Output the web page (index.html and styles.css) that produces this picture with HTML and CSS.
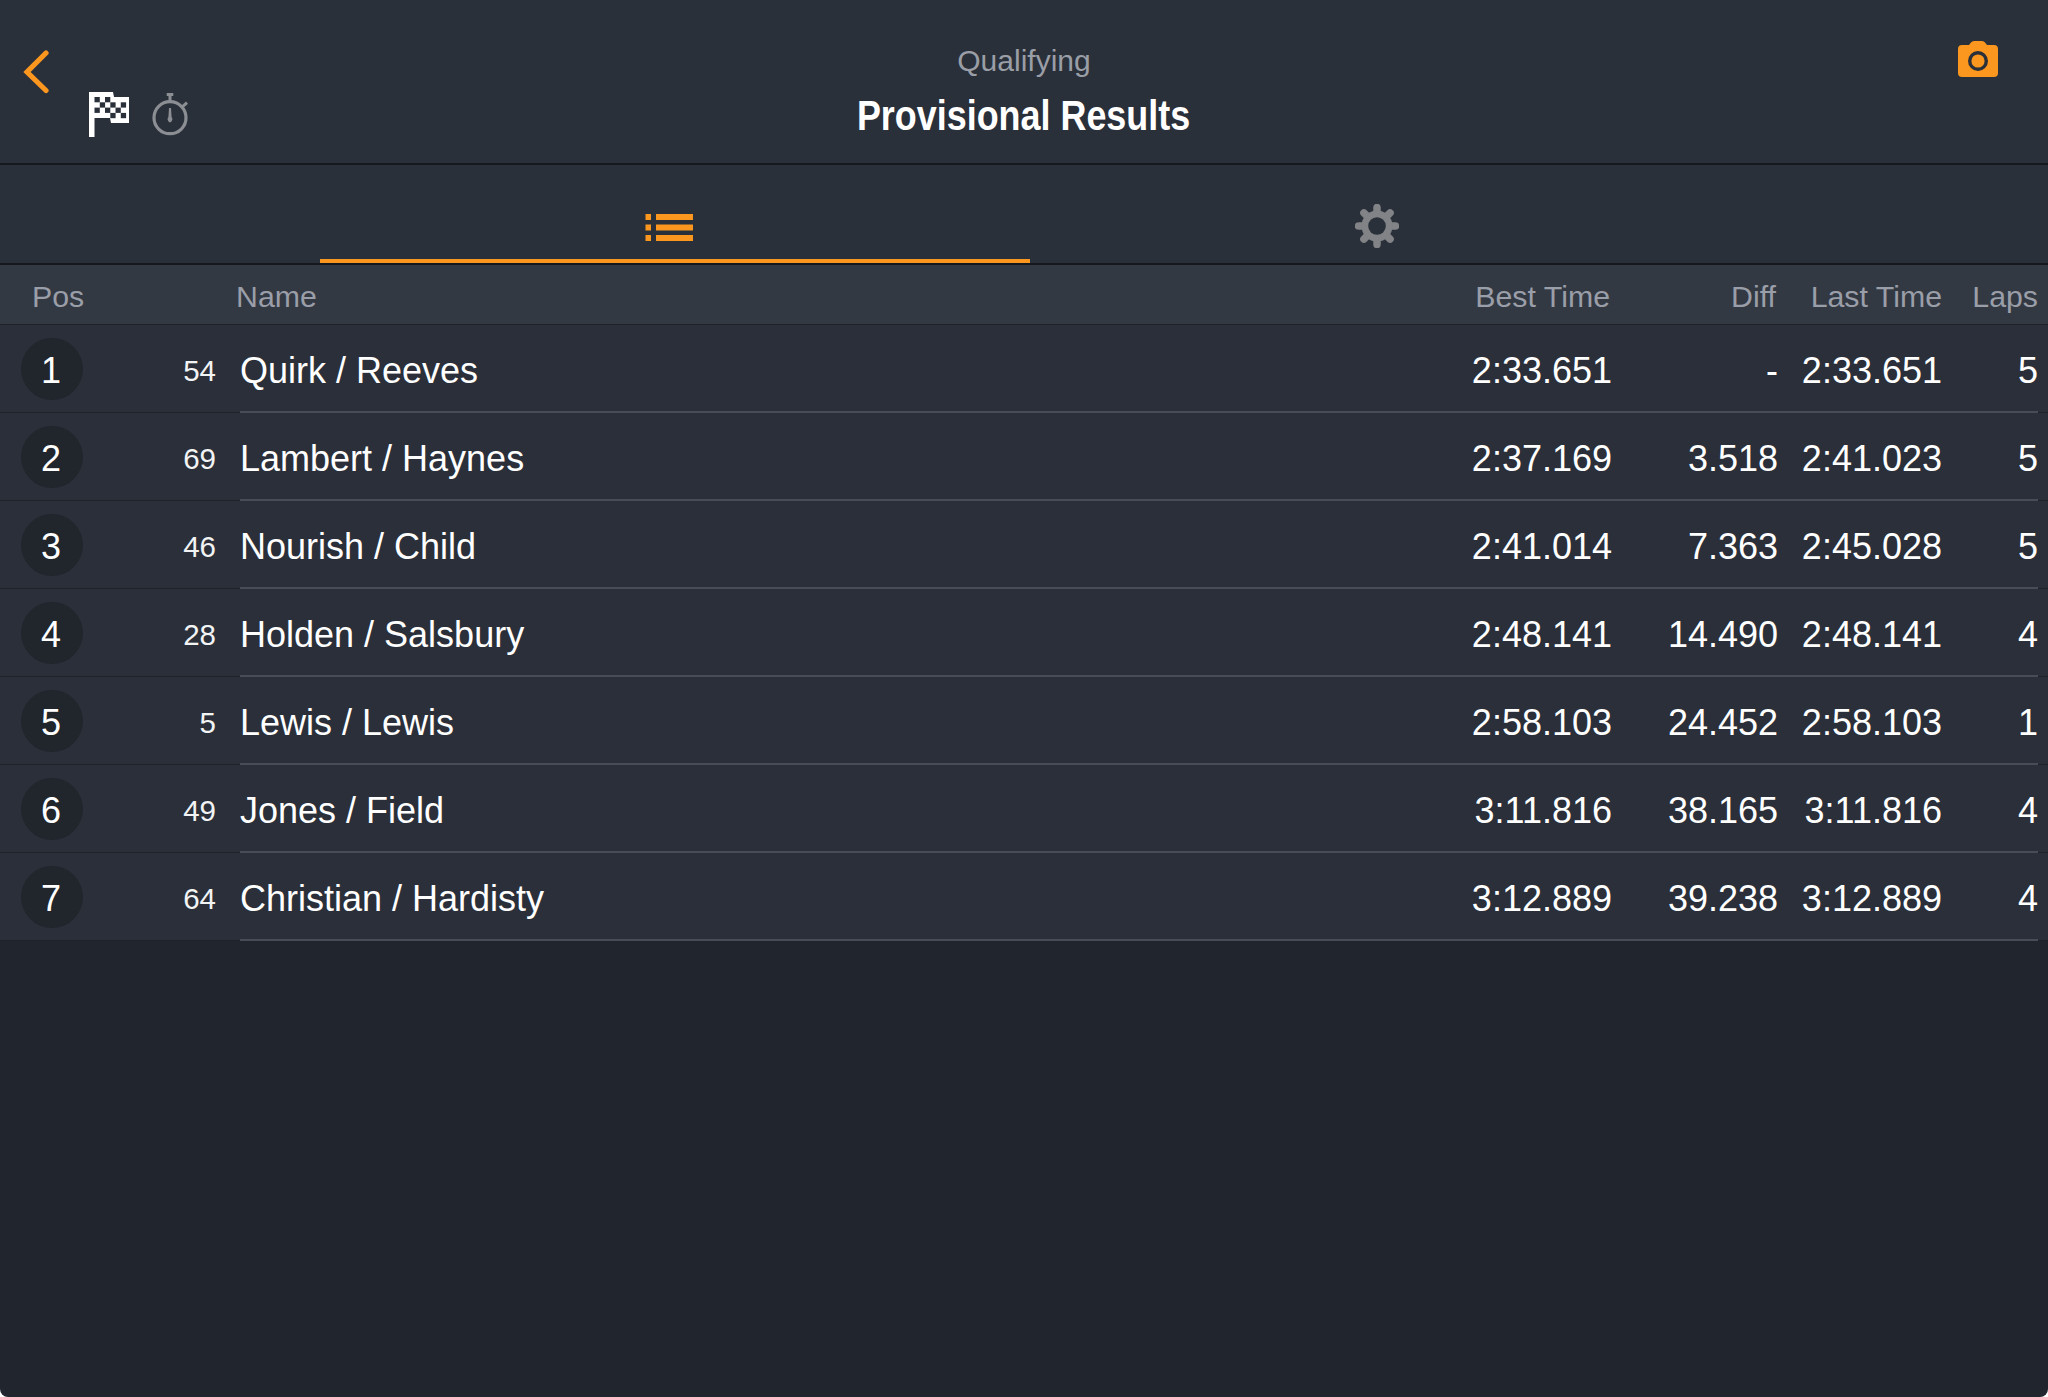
FILE: index.html
```html
<!DOCTYPE html>
<html lang="en">
<head>
<meta charset="utf-8">
<title>Provisional Results</title>
<link rel="stylesheet" href="styles.css">
</head>
<body>
<div class="app">
  <header class="topbar">
    <div class="topbar-left">
      <svg class="back" width="28" height="44" viewBox="0 0 28 44"><path d="M23 3 L4 22 L23 40.500" fill="none" stroke="#fb961e" stroke-width="5.200" stroke-linecap="round" stroke-linejoin="miter"/></svg>
      <div class="status-icons">
        <svg width="41" height="45" viewBox="0 0 41 45">
          <path d="M0 0H24L25 5H40V31H22L21 26H5.500V45H0Z" fill="#fff"/>
          <g fill="#2a303a">
            <rect x="5.500" y="5" width="5.300" height="5.300"/><rect x="16" y="5" width="5.300" height="5.300"/>
            <rect x="10.800" y="10.300" width="5.300" height="5.300"/><rect x="21.300" y="10.300" width="5.300" height="5.300"/><rect x="31.800" y="10.300" width="5.300" height="5.300"/>
            <rect x="5.500" y="15.600" width="5.300" height="5.300"/><rect x="16" y="15.600" width="5.300" height="5.300"/><rect x="26.500" y="15.600" width="5.300" height="5.300"/>
            <rect x="21.300" y="20.900" width="5.300" height="5.300"/><rect x="31.800" y="20.900" width="5.300" height="5.300"/>
          </g>
        </svg>
        <svg class="watch" width="38" height="44" viewBox="0 0 38 44">
          <circle cx="19" cy="24.700" r="16" fill="none" stroke="#8b8e93" stroke-width="3.200"/>
          <g fill="#8b8e93">
            <rect x="15.700" y="0" width="6.600" height="3"/>
            <rect x="17.500" y="3" width="3" height="6"/>
            <path d="M30.500 12.500L35 8.500L37 10.800L32.500 14.800Z"/>
            <path d="M18 15h2l.6 9a2.400 3 0 1 1-3.200 0z"/>
          </g>
        </svg>
      </div>
    </div>
    <div class="titles">
      <div class="subtitle">Qualifying</div>
      <h1 class="title">Provisional Results</h1>
    </div>
    <div class="topbar-right">
      <svg width="40" height="36" viewBox="0 0 40 36">
        <path d="M4 4H11L13 1.500Q14 0 16 0H24Q26 0 27 1.500L29 4H36Q40 4 40 8V32Q40 36 36 36H4Q0 36 0 32V8Q0 4 4 4Z" fill="#fb961e"/>
        <circle cx="20" cy="20" r="8.300" fill="none" stroke="#2a303a" stroke-width="3.400"/>
      </svg>
    </div>
  </header>

  <nav class="tabs">
    <div class="tab tab-active">
      <svg width="48" height="27" viewBox="0 0 48 27" fill="#fb961e">
        <rect x="0.500" y="0" width="5.500" height="6"/><rect x="11" y="0" width="37" height="6"/>
        <rect x="0.500" y="10.500" width="5.500" height="6"/><rect x="11" y="10.500" width="37" height="6"/>
        <rect x="0.500" y="21" width="5.500" height="6"/><rect x="11" y="21" width="37" height="6"/>
      </svg>
    </div>
    <div class="tab tab-settings">
      <svg width="44" height="44" viewBox="-22 -22 44 44">
        <g stroke="#818386" stroke-width="7.500" stroke-linecap="round">
          <line x1="0" y1="-18.500" x2="0" y2="18.500"/>
          <line x1="0" y1="-18.500" x2="0" y2="18.500" transform="rotate(45)"/>
          <line x1="0" y1="-18.500" x2="0" y2="18.500" transform="rotate(90)"/>
          <line x1="0" y1="-18.500" x2="0" y2="18.500" transform="rotate(135)"/>
        </g>
        <circle r="15.500" fill="#818386"/>
        <circle r="8.800" fill="#2a303a"/>
      </svg>
    </div>
  </nav>

  <div class="thead">
    <div class="th-lead">
      <span>Pos</span>
    </div>
    <div class="cols">
      <span class="th-name">Name</span>
      <span class="num">Best Time</span>
      <span class="num">Diff</span>
      <span class="num">Last Time</span>
      <span class="num">Laps</span>
    </div>
  </div>

  <div class="row">
    <div class="lead"><span class="pos">1</span><span class="car">54</span></div>
    <div class="cols main"><span>Quirk / Reeves</span><span class="num">2:33.651</span><span class="num">-</span><span class="num">2:33.651</span><span class="num">5</span></div>
  </div>
  <div class="row">
    <div class="lead"><span class="pos">2</span><span class="car">69</span></div>
    <div class="cols main"><span>Lambert / Haynes</span><span class="num">2:37.169</span><span class="num">3.518</span><span class="num">2:41.023</span><span class="num">5</span></div>
  </div>
  <div class="row">
    <div class="lead"><span class="pos">3</span><span class="car">46</span></div>
    <div class="cols main"><span>Nourish / Child</span><span class="num">2:41.014</span><span class="num">7.363</span><span class="num">2:45.028</span><span class="num">5</span></div>
  </div>
  <div class="row">
    <div class="lead"><span class="pos">4</span><span class="car">28</span></div>
    <div class="cols main"><span>Holden / Salsbury</span><span class="num">2:48.141</span><span class="num">14.490</span><span class="num">2:48.141</span><span class="num">4</span></div>
  </div>
  <div class="row">
    <div class="lead"><span class="pos">5</span><span class="car">5</span></div>
    <div class="cols main"><span>Lewis / Lewis</span><span class="num">2:58.103</span><span class="num">24.452</span><span class="num">2:58.103</span><span class="num">1</span></div>
  </div>
  <div class="row">
    <div class="lead"><span class="pos">6</span><span class="car">49</span></div>
    <div class="cols main"><span>Jones / Field</span><span class="num">3:11.816</span><span class="num">38.165</span><span class="num">3:11.816</span><span class="num">4</span></div>
  </div>
  <div class="row">
    <div class="lead"><span class="pos">7</span><span class="car">64</span></div>
    <div class="cols main"><span>Christian / Hardisty</span><span class="num">3:12.889</span><span class="num">39.238</span><span class="num">3:12.889</span><span class="num">4</span></div>
  </div>
</div>
</body>
</html>
```
FILE: styles.css
```css
* { box-sizing: border-box; }
html, body { margin: 0; height: 100%; background: #fff; }
body { font-family: "Liberation Sans", Arial, sans-serif; overflow: hidden; }

.app {
  height: 1397px;
  background: #21252d;
  border-radius: 0 0 8px 8px;
  overflow: hidden;
  color: #fff;
}

.topbar {
  height: 165px;
  display: grid;
  grid-template-columns: 1fr auto 1fr;
  background: #2a303a;
  border-bottom: 2px solid #15181c;
}
.topbar-left { display: flex; align-items: flex-start; padding-left: 23px; }
.back { margin-top: 50px; display: block; }
.status-icons { display: flex; align-items: flex-start; margin-left: 38px; margin-top: 92px; }
.watch { margin-left: 21px; margin-top: 1px; }
.titles { text-align: center; padding-top: 44px; }
.subtitle { font-size: 30px; line-height: 34px; color: #9a9ea6; }
.title {
  margin: 14px 0 0;
  font-size: 43px;
  line-height: 46px;
  font-weight: 700;
  color: #fff;
  white-space: nowrap;
  transform: scaleX(.835);
}
.topbar-right { display: flex; justify-content: flex-end; padding: 41px 50px 0 0; }

.tabs {
  height: 100px;
  display: flex;
  padding-left: 320px;
  background: #2a303a;
  border-bottom: 2px solid #15181c;
}
.tab { height: 98px; }
.tab-active { width: 710px; padding: 49px 0 0 325px; border-bottom: 4px solid #fb961e; }
.tab-settings { padding: 39px 0 0 325px; }
.tab svg { display: block; }

.thead {
  height: 60px;
  display: flex;
  background: #333943;
  border-bottom: 1px solid #1e2229;
  color: #9a9ea8;
  font-size: 30.300px;
}
.th-lead { width: 240px; padding: 14px 0 0 32px; line-height: 36px; }
.cols {
  flex: 1;
  margin-right: 10px;
  display: grid;
  grid-template-columns: 1fr 240px 166px 164px 96px;
}
.thead .cols { padding-top: 14px; line-height: 36px; }
.thead .num:nth-child(2), .thead .num:nth-child(3) { transform: translateX(-2px); }
.th-name { margin-left: -4px; }
.num { text-align: right; white-space: nowrap; }

.row {
  height: 88px;
  display: flex;
  background: #2a2f39;
  border-bottom: 1px solid #1e2229;
}
.lead {
  width: 240px;
  display: flex;
  align-items: center;
  padding-left: 21px;
}
.pos {
  width: 62px;
  height: 62px;
  flex: none;
  border-radius: 50%;
  background: #21252c;
  text-align: center;
  font-size: 36px;
  line-height: 66px;
  text-indent: -2px;
  margin-top: 1px;
}
.car { width: 133px; padding-top: 4px; text-align: right; font-size: 29.500px; color: #f2f3f4; }
.main {
  align-items: center;
  margin-bottom: -1px;
  border-bottom: 2px solid #474c57;
  font-size: 36px;
  padding-top: 5px;
}
```
